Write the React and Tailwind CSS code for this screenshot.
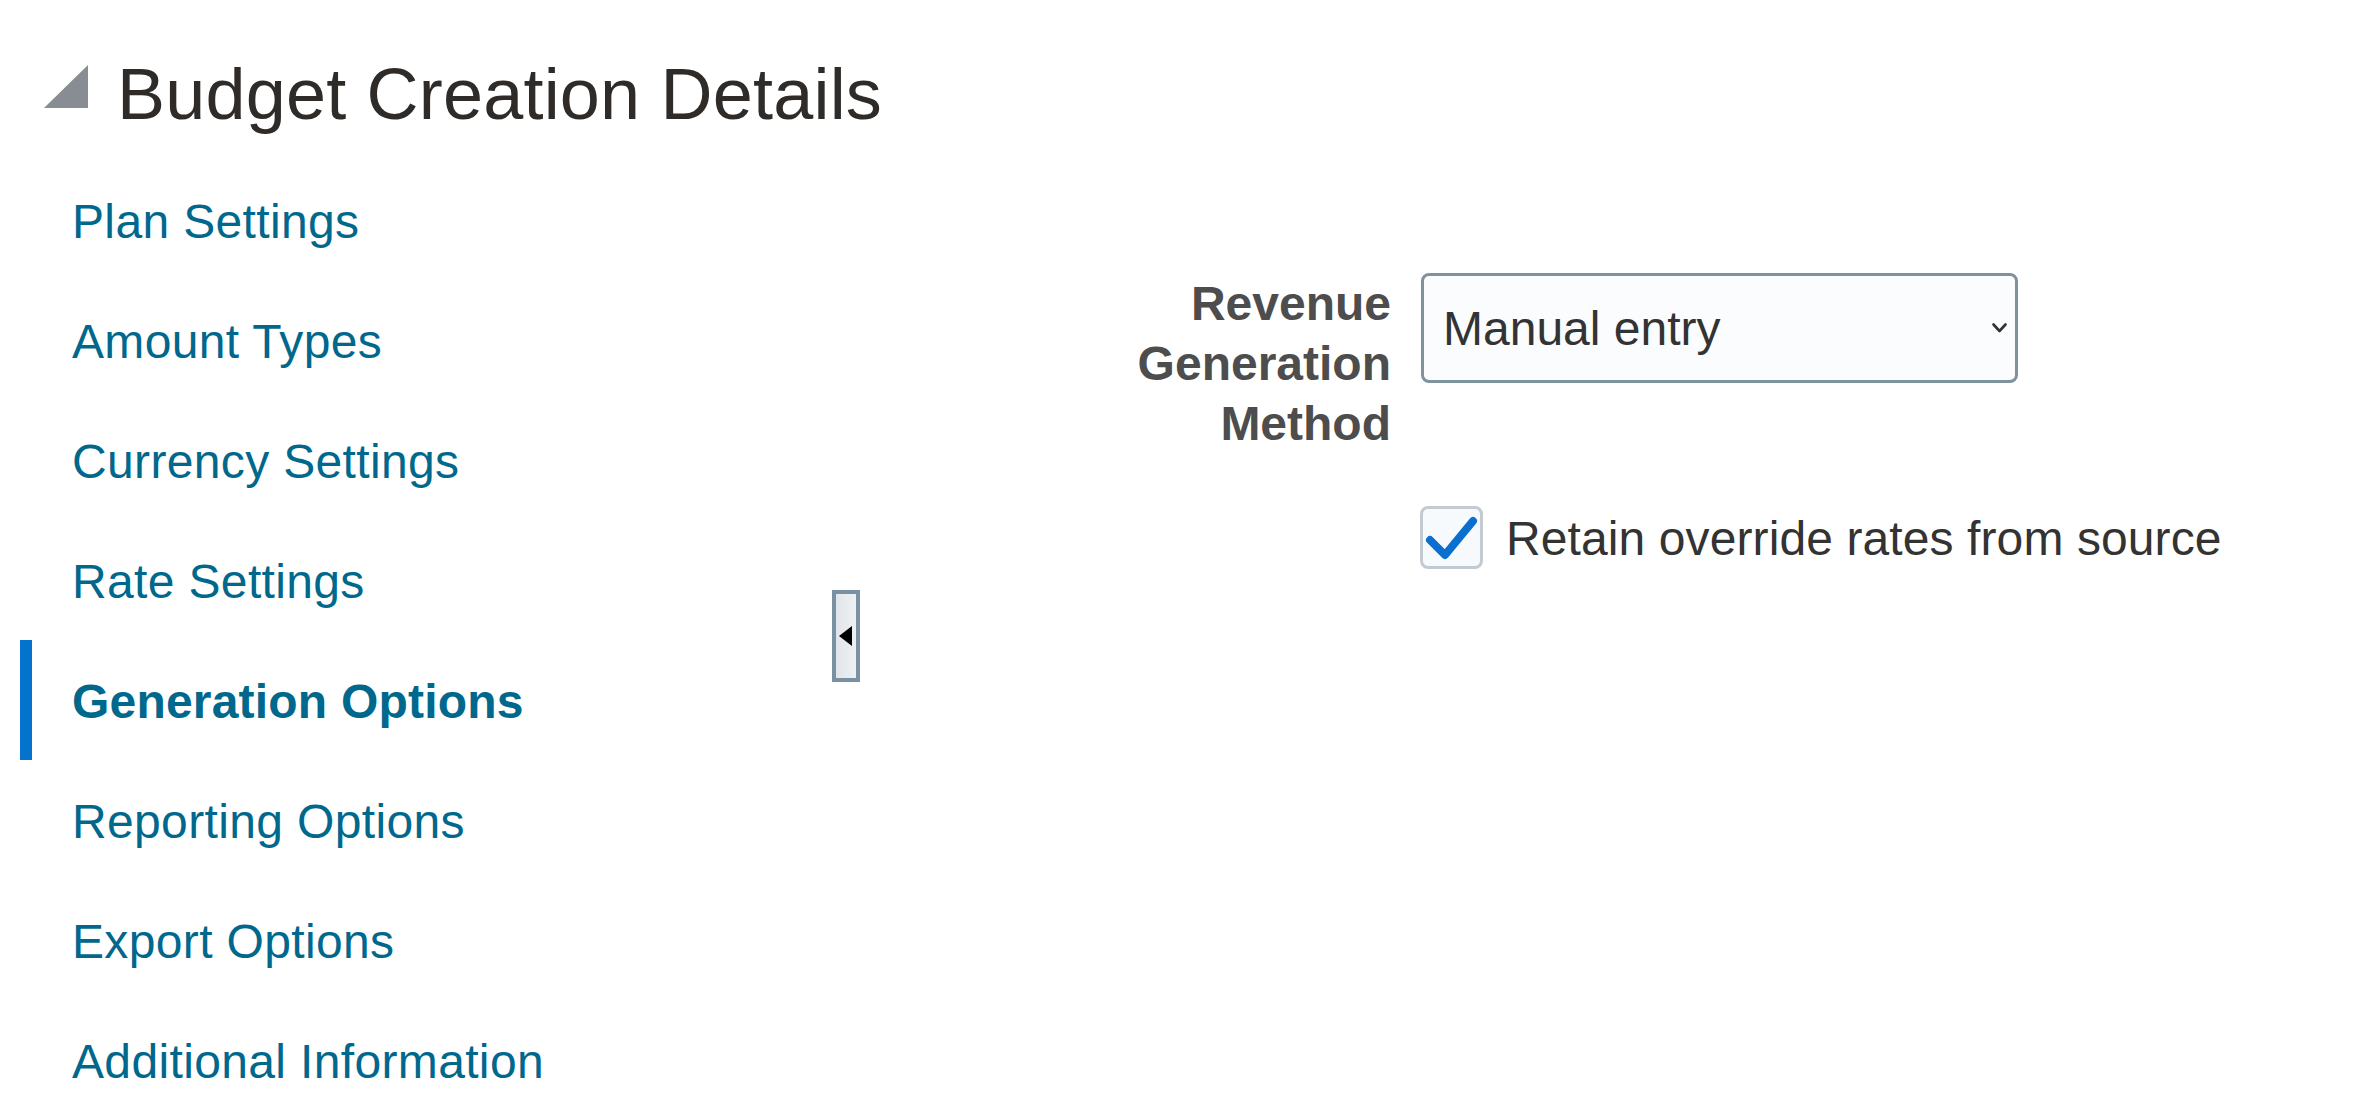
import React from "react";

const items = [
  { label: "Plan Settings", active: false },
  { label: "Amount Types", active: false },
  { label: "Currency Settings", active: false },
  { label: "Rate Settings", active: false },
  { label: "Generation Options", active: true },
  { label: "Reporting Options", active: false },
  { label: "Export Options", active: false },
  { label: "Additional Information", active: false },
];

export default function App() {
  return (
    <div className="w-[2358px] h-[1098px] overflow-hidden bg-white pt-[56px] font-['Liberation_Sans',Arial,Helvetica,sans-serif]">
      <div className="flex h-[72px] items-start">
        <svg className="ml-[44px] mt-[9px]" width="44" height="43" viewBox="0 0 44 43">
          <polygon points="0,43 44,43 44,0" fill="#878d92" />
        </svg>
        <h1 className="ml-[29px] pt-[2px] text-[72px] leading-[72px] font-normal tracking-[0.2px] text-[#2f2b28]">
          Budget Creation Details
        </h1>
      </div>

      <div className="mt-[32px] flex">
        <nav className="flex w-[832px] flex-col">
          {items.map((it) => (
            <div key={it.label} className="flex h-[120px] items-center">
              <div
                className={
                  it.active
                    ? "ml-[20px] h-[120px] w-[12px] bg-[#0572ce]"
                    : "ml-[20px] h-[120px] w-[12px]"
                }
              />
              <span
                className={
                  it.active
                    ? "ml-[40px] pt-[4px] text-[48px] leading-[60px] font-bold tracking-[0.2px] text-[#00688c]"
                    : "ml-[40px] pt-[4px] text-[48px] leading-[60px] font-normal tracking-[0.35px] text-[#00688c]"
                }
              >
                {it.label}
              </span>
            </div>
          ))}
        </nav>

        <div className="mb-[8px] flex h-[92px] w-[28px] items-center justify-center self-center border-[4px] border-[#7a90a3] bg-linear-to-r from-[#e1e5e9] to-[#eef1f3]">
          <svg width="13" height="20" viewBox="0 0 13 20" className="mr-[2px]">
            <polygon points="13,0 13,20 0,10" fill="#000" />
          </svg>
        </div>

        <div className="pl-[261px] pt-[114px]">
          <div className="flex items-start">
            <div className="w-[270px] text-right text-[48px] leading-[60px] font-bold text-[#4d4d4d]">
              Revenue
              <br />
              Generation
              <br />
              Method
            </div>
            <div className="ml-[30px] -mt-[1px] flex h-[110px] w-[597px] items-center rounded-[8px] border-[3px] border-[#7f939f] bg-[#fbfcfe] pl-[19px] pr-[8px]">
              <span className="flex-1 pt-[2px] text-[48px] leading-[60px] text-[#333333]">Manual entry</span>
              <svg width="15" height="10" viewBox="0 0 15 10">
                <polyline
                  points="1.5,1.5 7.5,8 13.5,1.5"
                  fill="none"
                  stroke="#333"
                  strokeWidth="2.6"
                  strokeLinecap="round"
                  strokeLinejoin="round"
                />
              </svg>
            </div>
          </div>

          <div className="ml-[299px] mt-[52px] flex items-center">
            <div className="h-[63px] w-[63px] rounded-[8px] border-[3px] border-[#c3cad1] bg-[#f7fafd]">
              <svg width="57" height="57" viewBox="0 0 57 57">
                <polyline
                  points="7,31 22,46 50,12"
                  fill="none"
                  stroke="#0b6fd0"
                  strokeWidth="8"
                  strokeLinecap="round"
                  strokeLinejoin="round"
                />
              </svg>
            </div>
            <span className="ml-[23px] pt-[2px] text-[48px] leading-[60px] tracking-[0.1px] text-[#333333]">
              Retain override rates from source
            </span>
          </div>
        </div>
      </div>
    </div>
  );
}
